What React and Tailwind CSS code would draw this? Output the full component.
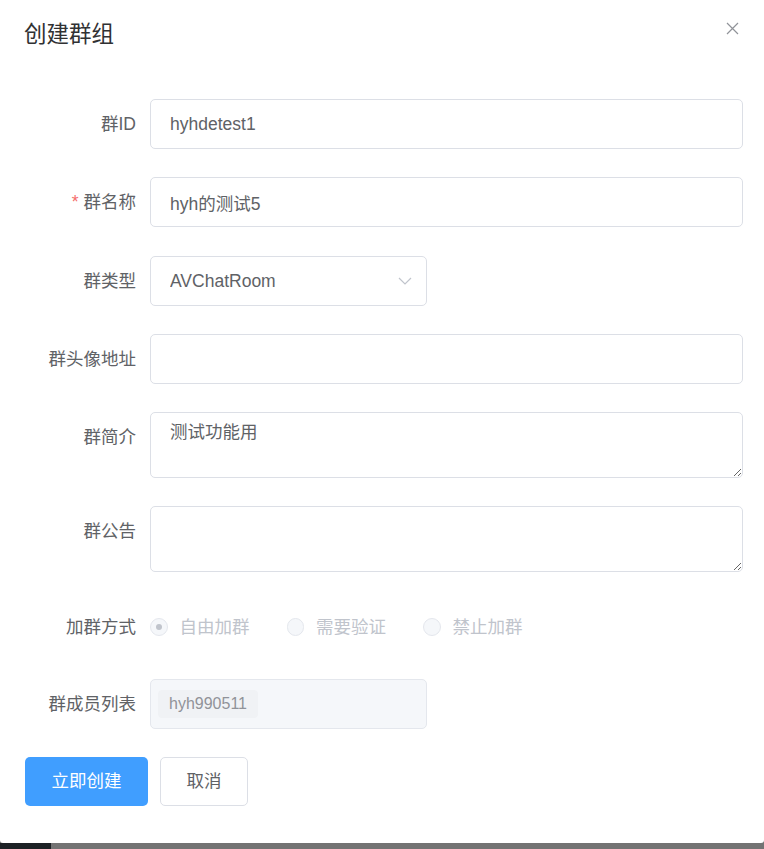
import React from "react";

const font = "font-['Liberation_Sans','Noto_Sans_CJK_SC',sans-serif]";

function Row({ label, required, children, align = "items-center", className = "" }) {
  return (
    <div className={`flex ${align} ${className}`}>
      <label className="w-[126px] shrink-0 pr-[14px] text-right text-[17.5px] leading-[50px] text-[#606266]">
        {required && <span className="mr-[5px] text-[#f56c6c]">*</span>}
        {label}
      </label>
      <div className="flex-1">{children}</div>
    </div>
  );
}

function Radio({ label, checked }) {
  return (
    <span className="mr-[37px] inline-flex items-center">
      <span className="flex h-[17.5px] w-[17.5px] items-center justify-center rounded-full border border-[#e4e7ed] bg-[#f5f7fa]">
        {checked && <span className="h-[6px] w-[6px] rounded-full bg-[#c0c4cc]" />}
      </span>
      <span className="pl-[12px] text-[17.5px] text-[#c0c4cc]">{label}</span>
    </span>
  );
}

export default function App() {
  const inputCls =
    "h-[50px] w-full rounded-[5px] border border-[#dcdfe6] bg-white px-[19px] text-[17.5px] text-[#606266] outline-none";
  const areaCls =
    "block h-[66px] w-full resize-y rounded-[5px] border border-[#dcdfe6] bg-white px-[19px] py-[7px] text-[17.5px] leading-[24px] text-[#606266] outline-none";

  return (
    <div className={`flex h-[849px] w-[764px] flex-col bg-[#737373] ${font}`}>
      <div className="relative h-[843px] shrink-0 rounded-b-[3px] bg-white">
        <div className="px-6 pt-[21px]">
          <h2 className="text-[22.5px] leading-[28px] text-[#303133]">创建群组</h2>
          <button className="absolute right-[25px] top-[22px] text-[#909399]">
            <svg width="13" height="13" viewBox="0 0 13 13" fill="none" stroke="currentColor" strokeWidth="1.2">
              <path d="M1 1L12 12M12 1L1 12" />
            </svg>
          </button>
        </div>

        <div className="mt-[50px] flex flex-col pl-6 pr-[21px]">
          <Row label="群ID">
            <input className={inputCls} defaultValue="hyhdetest1" readOnly />
          </Row>
          <Row label="群名称" required className="mt-[28px]">
            <input className={inputCls} defaultValue="hyh的测试5" readOnly />
          </Row>
          <Row label="群类型" className="mt-[29px]">
            <div className="relative w-[277px]">
              <input className={inputCls} defaultValue="AVChatRoom" readOnly />
              <svg
                className="absolute right-[15px] top-[20px] text-[#c0c4cc]"
                width="14"
                height="10"
                viewBox="0 0 14 10"
                fill="none"
                stroke="currentColor"
                strokeWidth="1.2"
              >
                <path d="M1 2L7 8L13 2" />
              </svg>
            </div>
          </Row>
          <Row label="群头像地址" className="mt-[28px]">
            <input className={inputCls} readOnly />
          </Row>
          <Row label="群简介" align="items-start" className="mt-[28px]">
            <textarea className={areaCls} defaultValue="测试功能用" readOnly />
          </Row>
          <Row label="群公告" align="items-start" className="mt-[28px]">
            <textarea className={areaCls} readOnly />
          </Row>
          <Row label="加群方式" className="mt-[28px] h-[54px]">
            <div className="flex h-[50px] items-center">
              <Radio label="自由加群" checked />
              <Radio label="需要验证" />
              <Radio label="禁止加群" />
            </div>
          </Row>
          <Row label="群成员列表" className="mt-[25px]">
            <div className="flex h-[50px] w-[277px] items-center rounded-[5px] border border-[#e4e7ed] bg-[#f5f7fa] px-[7px]">
              <span className="flex h-[28px] items-center rounded-[4px] border border-[#f0f2f5] bg-[#f0f2f5] px-[10px] text-[16px] text-[#909399]">
                hyh990511
              </span>
            </div>
          </Row>
          <div className="mt-[28px] flex gap-[12px] pl-px">
            <button className="h-[49px] w-[123px] rounded-[5px] bg-[#409eff] text-[17.5px] text-white">立即创建</button>
            <button className="h-[49px] w-[88px] rounded-[5px] border border-[#dcdfe6] bg-white text-[17.5px] text-[#606266]">
              取消
            </button>
          </div>
        </div>
      </div>
      <div className="flex h-[6px]">
        <div className="w-[51px] bg-[#1d2125]" />
        <div className="flex-1 bg-[#737373]" />
      </div>
    </div>
  );
}
